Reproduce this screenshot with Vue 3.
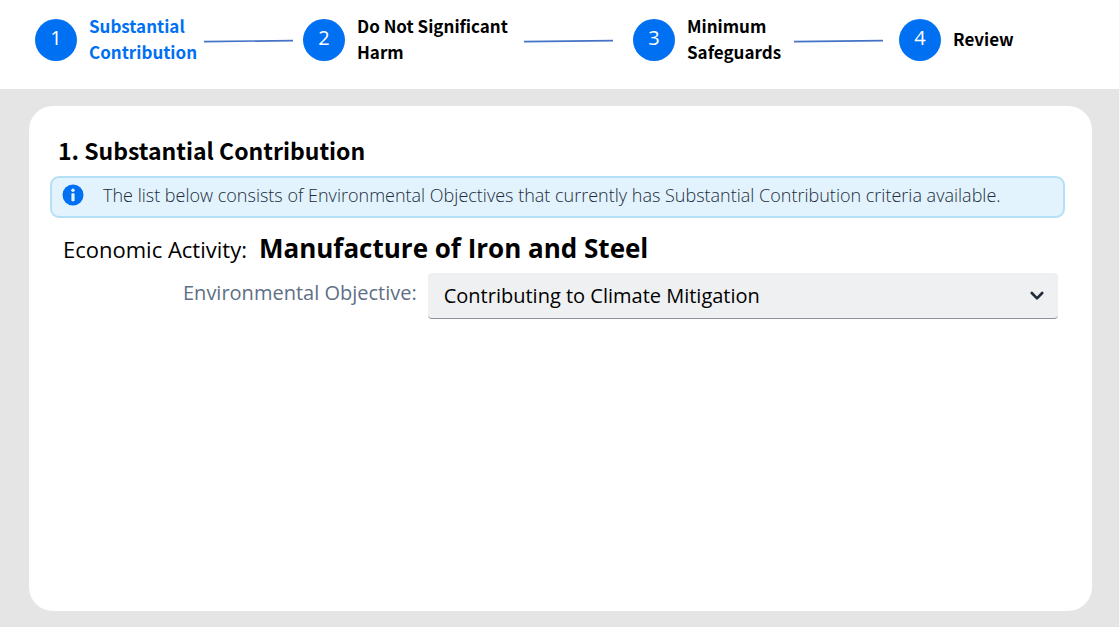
<script setup>
import { ref } from 'vue'

const steps = [
  { lines: ['Substantial', 'Contribution'], current: true },
  { lines: ['Do Not Significant', 'Harm'] },
  { lines: ['Minimum', 'Safeguards'] },
  { lines: ['Review'] },
]
const objective = ref('mitigation')
</script>

<template>
  <div class="page">
    <header class="header">
      <ol class="steps">
        <li
          v-for="(step, i) in steps"
          :key="i"
          class="step"
          :class="{ current: step.current }"
          :aria-current="step.current ? 'step' : null"
        >
          <span class="badge">{{ i + 1 }}</span>
          <span class="label">
            <span v-for="line in step.lines" :key="line" class="label-line">{{ line }}</span>
          </span>
          <svg v-if="i < steps.length - 1" class="connector" viewBox="0 0 89 6" preserveAspectRatio="none" aria-hidden="true">
            <path d="M0 4.6L89 3.6" stroke="#4472c4" stroke-width="1.7" />
          </svg>
        </li>
      </ol>
    </header>

    <main class="main">
      <section class="card">
        <h1 class="title">1. Substantial Contribution</h1>
        <div class="notice">
          <svg class="info" viewBox="0 0 22 22" aria-hidden="true">
            <circle cx="11" cy="11" r="10.5" fill="#0070f3" />
            <circle cx="11" cy="6.2" r="1.7" fill="#e3f3fe" />
            <rect x="9.4" y="9.2" width="3.2" height="8" rx="0.8" fill="#e3f3fe" />
          </svg>
          <p class="notice-text">The list below consists of Environmental Objectives that currently has Substantial Contribution criteria available.</p>
        </div>
        <p class="activity">
          <span class="activity-label">Economic Activity:</span>
          <strong class="activity-name">Manufacture of Iron and Steel</strong>
        </p>
        <div class="field">
          <label class="field-label" for="objective">Environmental Objective:</label>
          <div class="select-wrap">
            <select id="objective" v-model="objective" class="select">
              <option value="mitigation">Contributing to Climate Mitigation</option>
            </select>
            <svg class="chevron" viewBox="0 0 14 10" aria-hidden="true">
              <path d="M1.8 2L7 7.4L12.2 2" fill="none" stroke="#212b3a" stroke-width="2.6" stroke-linecap="round" stroke-linejoin="round" />
            </svg>
          </div>
        </div>
      </section>
    </main>
  </div>
</template>

<style>
body {
  margin: 0;
}
</style>

<style scoped>
.page {
  box-sizing: border-box;
  display: flex;
  flex-direction: column;
  min-height: 100vh;
  border-right: 1px solid #f7f7f7;
  background: #e5e5e5;
  color: #000;
  font-family: "Open Sans", "Noto Sans", sans-serif;
}
.header {
  background: #fff;
  padding: 13px 0 22px 35px;
}
.steps {
  display: grid;
  grid-template-columns: 268fr 330fr 266fr 220fr;
  margin: 0;
  padding: 0;
  list-style: none;
}
.step {
  display: flex;
  align-items: center;
}
.badge {
  flex: none;
  width: 42px;
  height: 42px;
  margin-right: 12px;
  border-radius: 50%;
  background: #0070f3;
  color: #fff;
  font-size: 20px;
  line-height: 38px;
  text-align: center;
}
.label {
  flex: 1;
  padding-bottom: 2px;
  font-family: "Noto Sans CJK SC", "Open Sans", sans-serif;
  font-size: 17px;
  font-weight: 700;
  line-height: 26px;
  white-space: nowrap;
}
.label-line {
  display: block;
}
.current .label {
  color: #0070f3;
}
.connector {
  flex: none;
  width: 89px;
  height: 6px;
  margin-right: 20px;
}
.step:nth-child(3) .connector {
  margin-right: 16px;
}
.current .connector {
  margin-right: 10px;
}
.main {
  flex: 1;
  display: flex;
  padding: 17px 27px 16px 29px;
}
.card {
  flex: 1;
  box-sizing: border-box;
  padding: 26px 27px 28px 21px;
  border-radius: 24px;
  background: #fff;
}
.title {
  margin: 0 0 8px 8px;
  font-family: "Noto Sans CJK SC", "Open Sans", sans-serif;
  font-size: 23px;
  font-weight: 700;
  line-height: 36px;
}
.notice {
  display: flex;
  align-items: center;
  gap: 19px;
  box-sizing: border-box;
  min-height: 42px;
  padding: 0 10px 4px;
  border: 2px solid #b5dff5;
  border-radius: 9px;
  background: #e2f3fe;
}
.info {
  flex: none;
  width: 22px;
  height: 22px;
}
.notice-text {
  margin: 0;
  color: #212b3a;
  font-size: 18px;
  font-weight: 350;
  line-height: 24px;
}
.activity {
  display: flex;
  align-items: baseline;
  gap: 12px;
  margin: 12px 0 6px 13px;
  line-height: 36px;
}
.activity-label {
  font-size: 22px;
}
.activity-name {
  font-size: 26px;
  font-weight: 700;
}
.field {
  display: flex;
  align-items: center;
  gap: 11px;
  margin: 0 7px 0 133px;
}
.field-label {
  padding-bottom: 6px;
  color: #5f6f87;
  font-size: 20px;
  line-height: 28px;
}
.select-wrap {
  position: relative;
  flex: 1;
}
.select {
  appearance: none;
  display: block;
  width: 100%;
  height: 46px;
  padding: 0 40px 0 16px;
  border: 0;
  border-bottom: 1px solid #8b909c;
  border-radius: 4px;
  background: #eff0f2;
  color: #000;
  font-family: inherit;
  font-size: 20px;
}
.chevron {
  position: absolute;
  top: 18px;
  right: 14px;
  width: 14px;
  height: 10px;
  pointer-events: none;
}
</style>
